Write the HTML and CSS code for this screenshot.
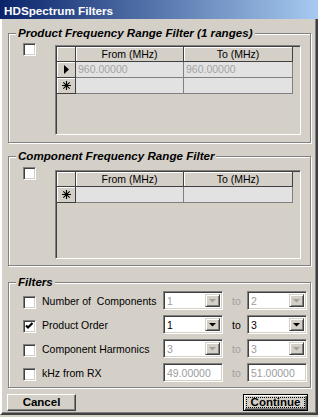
FILE: index.html
```html
<!DOCTYPE html>
<html lang="en">
<head>
  <meta charset="UTF-8">
  <title>HDSpectrum Filters</title>
  <link rel="stylesheet" href="styles.css">
</head>
<body>

  <div class="window">
    <div class="titlebar">HDSpectrum Filters</div>

    <div class="client">
      <!-- product ranges -->
      <fieldset class="group range-group product">
        <legend>Product Frequency Range Filter (1 ranges)</legend>
        <div class="group-body">
          <span class="check"></span>
          <div class="grid">
            <div class="grid-row head">
              <div class="hcell rowhead"></div>
              <div class="hcell col-from">From (MHz)</div>
              <div class="hcell col-to">To (MHz)</div>
            </div>
            <div class="grid-row">
              <div class="hcell rowhead">
                <svg width="5" height="9" viewBox="0 0 5 9"><polygon points="0,0 5,4.5 0,9" fill="#000"/></svg>
              </div>
              <div class="dcell col-from">960.00000</div>
              <div class="dcell col-to">960.00000</div>
            </div>
            <div class="grid-row">
              <div class="hcell rowhead">
                <svg width="9" height="9" viewBox="0 0 9 9"><path d="M4.5 0V9M0 4.5H9M1.3 1.3L7.7 7.7M7.7 1.3L1.3 7.7" stroke="#000" stroke-width="1.1"/></svg>
              </div>
              <div class="dcell col-from"></div>
              <div class="dcell col-to"></div>
            </div>
          </div>
        </div>
      </fieldset>

      <!-- component ranges -->
      <fieldset class="group range-group component">
        <legend>Component Frequency Range Filter</legend>
        <div class="group-body">
          <span class="check"></span>
          <div class="grid">
            <div class="grid-row head">
              <div class="hcell rowhead"></div>
              <div class="hcell col-from">From (MHz)</div>
              <div class="hcell col-to">To (MHz)</div>
            </div>
            <div class="grid-row">
              <div class="hcell rowhead">
                <svg width="9" height="9" viewBox="0 0 9 9"><path d="M4.5 0V9M0 4.5H9M1.3 1.3L7.7 7.7M7.7 1.3L1.3 7.7" stroke="#000" stroke-width="1.1"/></svg>
              </div>
              <div class="dcell col-from"></div>
              <div class="dcell col-to"></div>
            </div>
          </div>
        </div>
      </fieldset>

      <!-- filters -->
      <fieldset class="group filters">
        <legend>Filters</legend>
        <div class="filter-list">
          <div class="filter-row">
            <span class="check"></span>
            <span class="label">Number of&nbsp; Components</span>
            <div class="combo disabled">
              <span class="value">1</span>
              <span class="drop"><svg width="7" height="4" viewBox="0 0 7 4"><polygon points="0,0 7,0 3.5,3.5"/></svg></span>
            </div>
            <span class="to disabled">to</span>
            <div class="combo disabled">
              <span class="value">2</span>
              <span class="drop"><svg width="7" height="4" viewBox="0 0 7 4"><polygon points="0,0 7,0 3.5,3.5"/></svg></span>
            </div>
          </div>
          <div class="filter-row">
            <span class="check checked">
              <svg width="9" height="9" viewBox="0 0 9 9"><path d="M1 3.5L3 5.5L7.5 1" fill="none" stroke="#000" stroke-width="2.2"/></svg>
            </span>
            <span class="label">Product Order</span>
            <div class="combo">
              <span class="value">1</span>
              <span class="drop"><svg width="7" height="4" viewBox="0 0 7 4"><polygon points="0,0 7,0 3.5,3.5"/></svg></span>
            </div>
            <span class="to">to</span>
            <div class="combo">
              <span class="value">3</span>
              <span class="drop"><svg width="7" height="4" viewBox="0 0 7 4"><polygon points="0,0 7,0 3.5,3.5"/></svg></span>
            </div>
          </div>
          <div class="filter-row">
            <span class="check"></span>
            <span class="label">Component Harmonics</span>
            <div class="combo disabled">
              <span class="value">3</span>
              <span class="drop"><svg width="7" height="4" viewBox="0 0 7 4"><polygon points="0,0 7,0 3.5,3.5"/></svg></span>
            </div>
            <span class="to disabled">to</span>
            <div class="combo disabled">
              <span class="value">3</span>
              <span class="drop"><svg width="7" height="4" viewBox="0 0 7 4"><polygon points="0,0 7,0 3.5,3.5"/></svg></span>
            </div>
          </div>
          <div class="filter-row">
            <span class="check"></span>
            <span class="label">kHz from RX</span>
            <div class="textbox disabled">49.00000</div>
            <span class="to disabled">to</span>
            <div class="textbox disabled">51.00000</div>
          </div>
        </div>
      </fieldset>

      <div class="buttons">
        <button class="btn">Cancel</button>
        <button class="btn default"><span class="focus">Continue</span></button>
      </div>
    </div>
  </div>

</body>
</html>
```

FILE: styles.css
```css
body {
  margin: 0;
  background: #d4d0c8;
  font-family: "Liberation Sans", Arial, sans-serif;
  font-size: 10.5px;
  color: #000;
}
.window {
  width: 318px;
  height: 417px;
}
.titlebar {
  box-sizing: border-box;
  height: 19px;
  padding: 2px 0 0 4px;
  line-height: 17px;
  background: linear-gradient(to right, #0a246a, #a6caf0);
  color: #fff;
  font-weight: bold;
  font-size: 11.7px;
}
.client {
  box-sizing: border-box;
  height: 396px;
  padding: 7px 5px 2px 6px;
  border-left: 2px solid #fff;
  border-right: 2px solid #404040;
  border-bottom: 2px solid #404040;
  box-shadow: inset -1px -1px 0 #808080;
}

/* etched group boxes */
.group {
  margin: 0;
  min-width: 0;
  padding: 3px 9px 6px 14px;
  border: 1px solid #808080;
  box-shadow: inset 1px 1px 0 #fff, 1px 1px 0 #fff;
}
.group legend {
  margin-left: -7px;
  padding: 0 2px;
  line-height: 14px;
  background: #d4d0c8;
  font-weight: bold;
  font-style: italic;
  font-size: 11.6px;
}
.group.component {
  margin-top: 6px;
}
.group.filters {
  margin-top: 9px;
  padding: 2px 3px 5px 14px;
}
.group-body {
  display: flex;
  align-items: flex-start;
  gap: 19px;
  height: 93px;
}

/* checkbox */
.check {
  box-sizing: border-box;
  flex: none;
  width: 13px;
  height: 13px;
  display: flex;
  align-items: center;
  justify-content: center;
  background: #fff;
  border: 1px solid;
  border-color: #808080 #fff #fff #808080;
  box-shadow: inset 1px 1px 0 #404040, inset -1px -1px 0 #d4d0c8;
}
.component .check {
  margin-top: 1px;
}

/* data grid */
.grid {
  box-sizing: border-box;
  width: 246px;
  height: 90px;
  margin-top: 2px;
  border: 1px solid;
  border-color: #808080 #fff #fff #808080;
  box-shadow: inset 1px 1px 0 #404040, inset -1px -1px 0 #d4d0c8;
  padding: 1px;
}
.component .grid {
  margin-top: 4px;
  height: 89px;
}
.grid-row {
  display: flex;
  height: 16px;
}
.grid-row.head {
  height: 15px;
}
.hcell,
.dcell {
  box-sizing: border-box;
  flex: none;
  height: 100%;
}
.hcell {
  background: #d4d0c8;
  border-right: 1px solid #404040;
  border-bottom: 1px solid #404040;
  box-shadow: inset 1px 1px 0 #fff;
  text-align: center;
  line-height: 14px;
}
.hcell.rowhead {
  width: 19px;
  display: flex;
  align-items: center;
  justify-content: center;
}
.col-from {
  width: 108px;
}
.col-to {
  width: 109px;
}
.dcell {
  background: #e2e2e2;
  border-right: 1px solid #808080;
  border-bottom: 1px solid #808080;
  padding-left: 2px;
  line-height: 15px;
  color: #a4a4a4;
}

/* filters */
.filter-list {
  display: flex;
  flex-direction: column;
  gap: 5px;
}
.filter-row {
  display: flex;
  align-items: center;
  height: 19px;
}
.filter-row .check {
  margin-top: 3px;
}
.filter-row .label {
  width: 121px;
  margin-left: 6px;
  white-space: nowrap;
}
.combo,
.textbox {
  box-sizing: border-box;
  display: flex;
  width: 60px;
  height: 19px;
  padding: 2px;
  background: #fff;
  border: 1px solid;
  border-color: #808080 #fff #fff #808080;
  box-shadow: inset 1px 1px 0 #404040, inset -1px -1px 0 #d4d0c8;
}
.textbox {
  padding-left: 3px;
  line-height: 15px;
}
.combo .value {
  flex: 1;
  padding-left: 1px;
  line-height: 15px;
}
.combo .drop {
  box-sizing: border-box;
  width: 15px;
  display: flex;
  align-items: center;
  justify-content: center;
  background: #d4d0c8;
  border: 1px solid;
  border-color: #d4d0c8 #404040 #404040 #d4d0c8;
  box-shadow: inset 1px 1px 0 #fff, inset -1px -1px 0 #808080;
}
.combo .drop svg {
  fill: #000;
}
.combo.disabled .value,
.textbox.disabled {
  color: #9c9c9c;
}
.combo.disabled .drop svg {
  fill: #a0a0a0;
}
.to {
  width: 24px;
  padding-left: 9px;
  box-sizing: border-box;
}
.to.disabled {
  color: #a0a0a0;
}

/* buttons */
.buttons {
  display: flex;
  justify-content: space-between;
  margin: 6px 3px 0 -1px;
}
.btn {
  box-sizing: border-box;
  width: 69px;
  height: 17px;
  padding: 0;
  font-family: "Liberation Sans", Arial, sans-serif;
  font-weight: bold;
  font-size: 11.5px;
  line-height: 13px;
  color: #000;
  background: #d4d0c8;
  border: 1px solid;
  border-color: #fff #404040 #404040 #fff;
  box-shadow: inset -1px -1px 0 #808080;
}
.btn.default {
  width: 65px;
  padding: 3px;
  border-color: #000;
  box-shadow: inset 1px 1px 0 #fff, inset -1px -1px 0 #404040, inset -2px -2px 0 #808080;
}
.btn .focus {
  display: block;
  height: 9px;
  line-height: 9px;
  outline: 1px dotted #000;
}
```
